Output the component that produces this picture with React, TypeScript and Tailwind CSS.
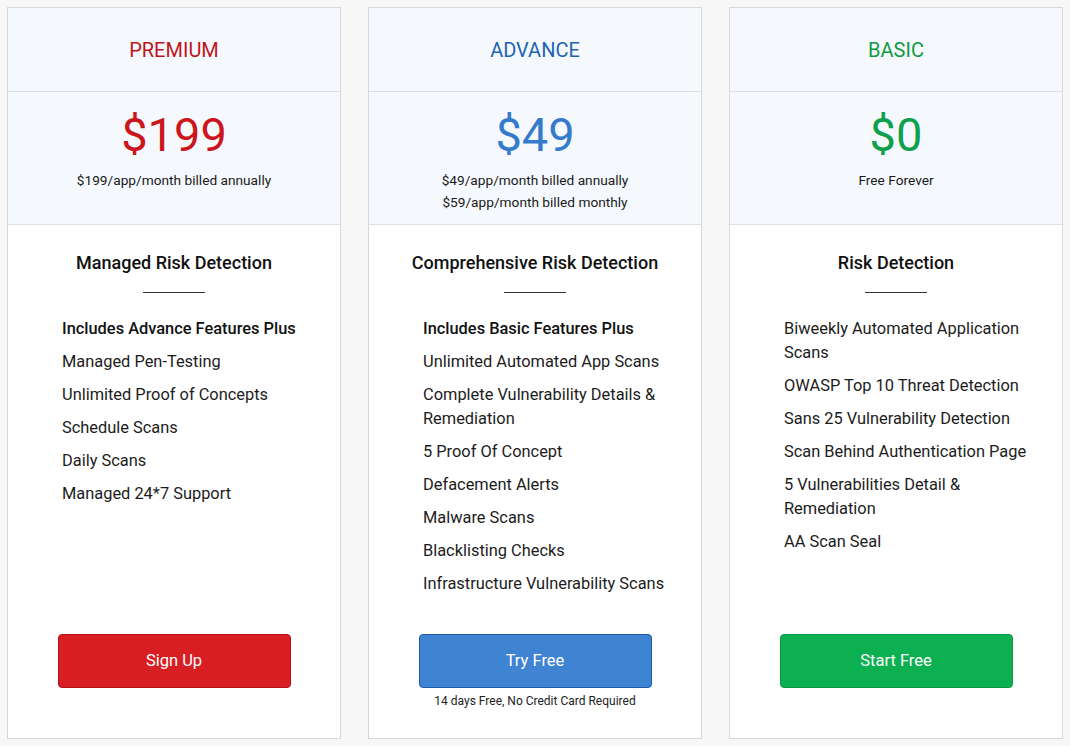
type Plan = {
  name: string;
  nameColor: string;
  price: string;
  priceColor: string;
  billing: string[];
  title: string;
  lead?: string;
  features: string[];
  button: string;
  buttonClass: string;
  note?: string;
};

const plans: Plan[] = [
  {
    name: "PREMIUM",
    nameColor: "text-[#bf151b]",
    price: "$199",
    priceColor: "text-[#cc161d]",
    billing: ["$199/app/month billed annually"],
    title: "Managed Risk Detection",
    lead: "Includes Advance Features Plus",
    features: [
      "Managed Pen-Testing",
      "Unlimited Proof of Concepts",
      "Schedule Scans",
      "Daily Scans",
      "Managed 24*7 Support",
    ],
    button: "Sign Up",
    buttonClass: "bg-[#d81e22] border-[#b01218]",
  },
  {
    name: "ADVANCE",
    nameColor: "text-[#1f63b5]",
    price: "$49",
    priceColor: "text-[#357bcd]",
    billing: ["$49/app/month billed annually", "$59/app/month billed monthly"],
    title: "Comprehensive Risk Detection",
    lead: "Includes Basic Features Plus",
    features: [
      "Unlimited Automated App Scans",
      "Complete Vulnerability Details & Remediation",
      "5 Proof Of Concept",
      "Defacement Alerts",
      "Malware Scans",
      "Blacklisting Checks",
      "Infrastructure Vulnerability Scans",
    ],
    button: "Try Free",
    buttonClass: "bg-[#3f83d3] border-[#1b5cad]",
    note: "14 days Free, No Credit Card Required",
  },
  {
    name: "BASIC",
    nameColor: "text-[#109a44]",
    price: "$0",
    priceColor: "text-[#0ea04c]",
    billing: ["Free Forever"],
    title: "Risk Detection",
    features: [
      "Biweekly Automated Application Scans",
      "OWASP Top 10 Threat Detection",
      "Sans 25 Vulnerability Detection",
      "Scan Behind Authentication Page",
      "5 Vulnerabilities Detail & Remediation",
      "AA Scan Seal",
    ],
    button: "Start Free",
    buttonClass: "bg-[#0cb050] border-[#0a9844]",
  },
];

function PlanCard({ plan }: { plan: Plan }) {
  return (
    <div className="w-[334px] h-[732px] flex flex-col bg-white border border-[#d8d8d8]">
      <div className="h-[84px] flex items-center justify-center bg-[#f5f9fd] border-b border-[#dcdfe3]">
        <h2 className={`text-[20px] leading-none ${plan.nameColor}`}>{plan.name}</h2>
      </div>
      <div className="h-[133px] bg-[#f5f9fd] border-b border-[#dcdfe3] pt-[15px] text-center">
        <div className={`text-[47px] leading-[56px] ${plan.priceColor}`}>{plan.price}</div>
        <div className="mt-[6px] text-[13.7px] leading-[22px] text-[#1a1a1a]">
          {plan.billing.map((b) => (
            <p key={b}>{b}</p>
          ))}
        </div>
      </div>
      <div className="pt-[26px] flex flex-col items-center">
        <h3 className="text-[18px] leading-[24px] font-medium text-[#111]">{plan.title}</h3>
        <div className="mt-[17px] w-[62px] h-px bg-[#333]" />
      </div>
      <ul className="mt-[24px] pl-[54px] pr-[24px] flex flex-col gap-[9px] text-[16.4px] leading-[24px] text-[#1c1c1c]">
        {plan.lead && <li className="font-medium text-[#111]">{plan.lead}</li>}
        {plan.features.map((f) => (
          <li key={f}>{f}</li>
        ))}
      </ul>
      <div className="mt-auto h-[104px] flex flex-col items-center">
        <button
          className={`w-[233px] h-[54px] rounded-[4px] border text-white text-[16.5px] ${plan.buttonClass}`}
        >
          {plan.button}
        </button>
        {plan.note && (
          <p className="mt-[6px] text-[12px] leading-[14px] text-[#222]">{plan.note}</p>
        )}
      </div>
    </div>
  );
}

export default function App() {
  return (
    <div
      className="w-[1070px] h-[746px] bg-[#f7f7f7] pl-[7px] pt-[7px] flex gap-[27px]"
      style={{ fontFamily: "Roboto, 'Liberation Sans', sans-serif" }}
    >
      {plans.map((p) => (
        <PlanCard key={p.name} plan={p} />
      ))}
    </div>
  );
}
